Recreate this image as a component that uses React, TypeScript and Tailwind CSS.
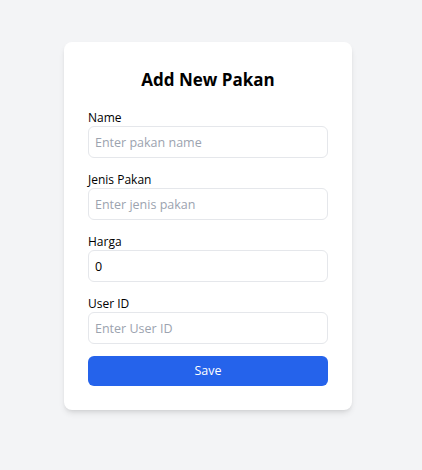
import React from "react";

const fields = [
  { label: "Name", placeholder: "Enter pakan name", value: "" },
  { label: "Jenis Pakan", placeholder: "Enter jenis pakan", value: "" },
  { label: "Harga", placeholder: "", value: "0" },
  { label: "User ID", placeholder: "Enter User ID", value: "" },
];

export default function App() {
  return (
    <div
      className="min-h-[470px] bg-[#f3f4f6] pt-[42px] pl-16"
      style={{ fontFamily: '"Open Sans", "Noto Sans", sans-serif' }}
    >
      <div className="w-72 rounded-lg bg-white p-6 shadow-md">
        <h2 className="mb-4 text-center text-[17px] leading-7 font-bold text-black">
          Add New Pakan
        </h2>
        <form className="flex flex-col gap-3.5" onSubmit={(e) => e.preventDefault()}>
          {fields.map((f) => (
            <div key={f.label}>
              <label className="block text-[12px] leading-4 text-black">
                {f.label}
              </label>
              <input
                type="text"
                defaultValue={f.value}
                placeholder={f.placeholder}
                className="h-8 w-full rounded-md border border-[#e5e7eb] px-1.5 text-[12.5px] text-black placeholder:text-[#9ca3af] focus:outline-none"
              />
            </div>
          ))}
          <button
            type="submit"
            className="-mt-0.5 h-[30px] w-full rounded-md bg-[#2563eb] text-[12.5px] text-white"
          >
            Save
          </button>
        </form>
      </div>
    </div>
  );
}
